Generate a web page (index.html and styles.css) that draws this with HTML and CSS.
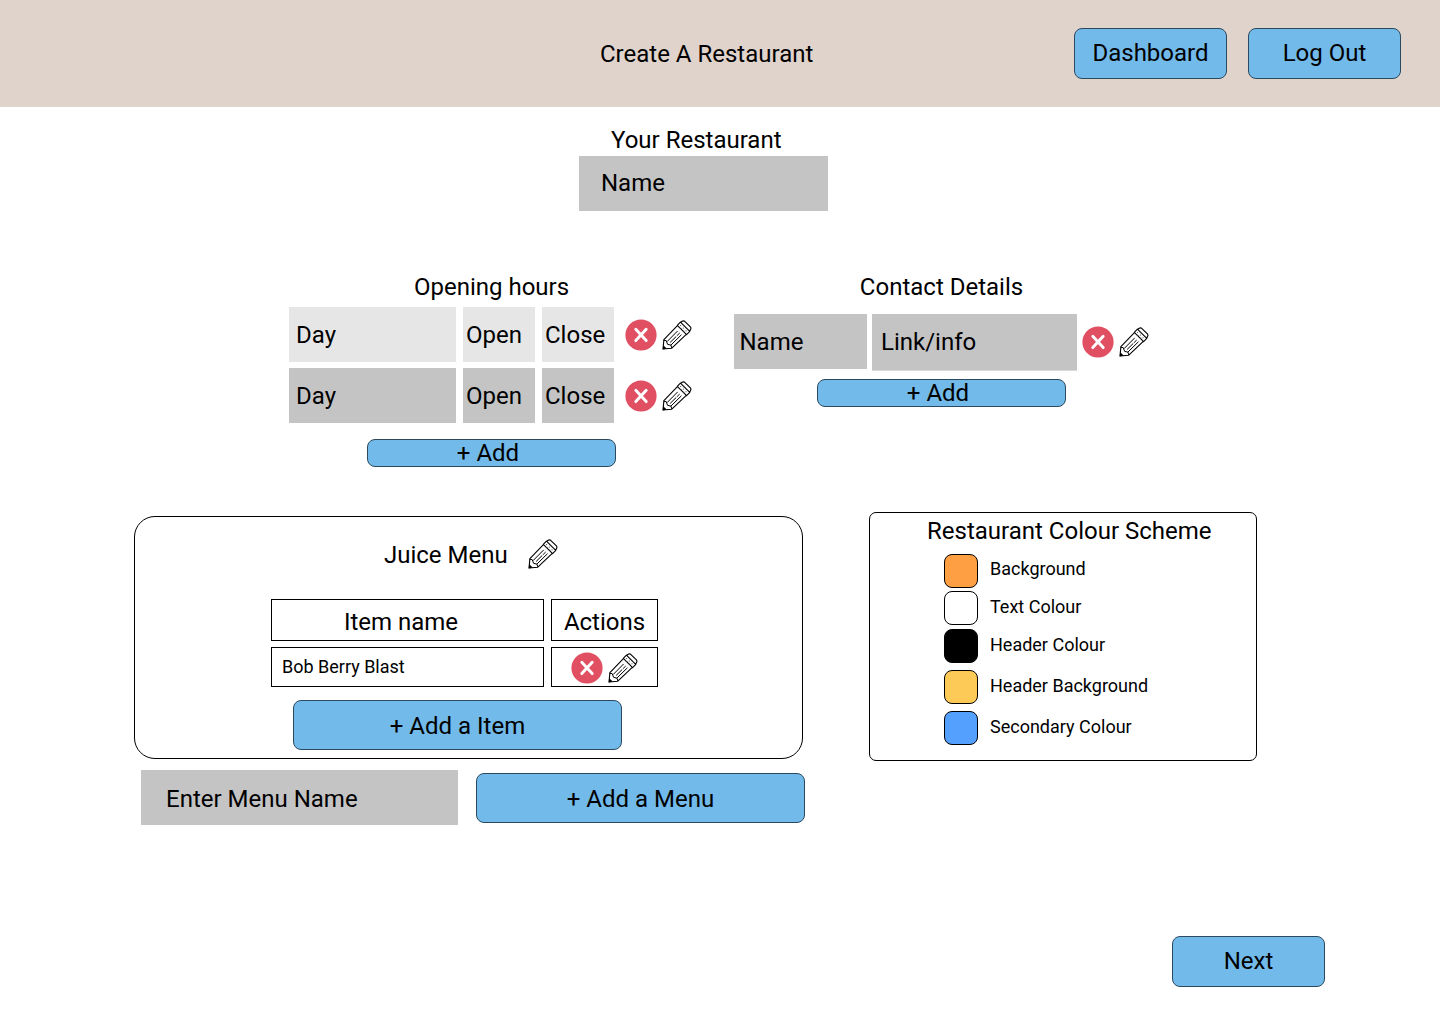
FILE: index.html
```html
<!DOCTYPE html>
<html lang="en">
<head>
<meta charset="utf-8">
<title>Create A Restaurant</title>
<link rel="stylesheet" href="styles.css">
</head>
<body>
<svg class="sprite" aria-hidden="true">
  <symbol id="remove" viewBox="0 0 32 32">
    <circle cx="16" cy="16" r="15.6" fill="#e14f62"/>
    <path d="M10.8 10.2 21.2 21.6M21.2 10.2 10.8 21.6" stroke="#fff" stroke-width="2.9" stroke-linecap="round"/>
  </symbol>
  <symbol id="pencil" viewBox="0 0 30 30">
    <g fill="none" stroke="#000" stroke-linejoin="round" stroke-linecap="round">
      <path stroke-width="1.1" d="M15.4 5.6 1.9 19.6 1 29 9.8 28.2 24.3 14.4M15.3 5.3 18.4 2.2 27.8 11.4 24.6 14.6ZM19.1 2 20.2 1.2Q21.5.4 22.7 1.3L28.4 6.9Q29.4 8.3 28.5 9.6L27.8 10.8"/>
      <path stroke-width="1" d="M2 20.3 4.2 20.6 5.6 24.3 9 25.2 9.7 27.6"/>
      <path stroke-width="1" d="M5.4 21.3 15.4 11.2M8.4 22.2 14 16.7M15.4 15.3 17.4 13.3M9.2 24.8 19.2 15"/>
      <path stroke-width="1" stroke="#333" d="M18.6 5.4v.05M21.3 8.1v.05M24 10.8v.05M18.9 8.4v.05M21.7 11.1v.05M21.5 5.7v.05M24.4 8.5v.05"/>
    </g>
    <path d="M1.3 25.2 4.7 28.5.7 29.4Z" fill="#000"/>
  </symbol>
</svg>

<header class="topbar">
  <h1 class="title">Create A Restaurant</h1>
  <nav class="nav">
    <button class="btn btn-nav">Dashboard</button>
    <button class="btn btn-nav">Log Out</button>
  </nav>
</header>

<main>
  <section class="restaurant">
    <h2>Your Restaurant</h2>
    <div class="field">Name</div>
  </section>

  <div class="details">
    <section class="hours">
      <h2>Opening hours</h2>
      <div class="row hours-row saved">
        <div class="field">Day</div><div class="field">Open</div><div class="field">Close</div>
        <div class="icons"><svg class="remove"><use href="#remove"/></svg><svg class="pencil"><use href="#pencil"/></svg></div>
      </div>
      <div class="row hours-row">
        <div class="field">Day</div><div class="field">Open</div><div class="field">Close</div>
        <div class="icons"><svg class="remove"><use href="#remove"/></svg><svg class="pencil"><use href="#pencil"/></svg></div>
      </div>
      <button class="btn btn-add">+ Add</button>
    </section>
    <section class="contact">
      <h2>Contact Details</h2>
      <div class="row contact-row">
        <div class="field">Name</div><div class="field link">Link/info</div>
        <div class="icons"><svg class="remove"><use href="#remove"/></svg><svg class="pencil"><use href="#pencil"/></svg></div>
      </div>
      <button class="btn btn-add">+ Add</button>
    </section>
  </div>

  <div class="setup">
    <div class="menus">
      <section class="menu-card">
        <div class="menu-head"><h2>Juice Menu</h2><svg class="pencil"><use href="#pencil"/></svg></div>
        <div class="items">
          <div class="cell head name-head">Item name</div>
          <div class="cell head">Actions</div>
          <div class="cell item">Bob Berry Blast</div>
          <div class="cell"><div class="icons"><svg class="remove"><use href="#remove"/></svg><svg class="pencil"><use href="#pencil"/></svg></div></div>
        </div>
        <button class="btn btn-wide">+ Add a Item</button>
      </section>
      <div class="new-menu">
        <div class="field">Enter Menu Name</div>
        <button class="btn btn-wide">+ Add a Menu</button>
      </div>
    </div>
    <section class="scheme">
      <h2>Restaurant Colour Scheme</h2>
      <ul>
        <li><span class="swatch orange"></span>Background</li>
        <li><span class="swatch white"></span>Text Colour</li>
        <li><span class="swatch black"></span>Header Colour</li>
        <li><span class="swatch yellow"></span>Header Background</li>
        <li><span class="swatch blue"></span>Secondary Colour</li>
      </ul>
    </section>
  </div>

  <div class="next"><button class="btn btn-nav">Next</button></div>
</main>
</body>
</html>
```
FILE: styles.css
```css
* { box-sizing: border-box; }

body {
  margin: 0;
  width: 1440px;
  height: 1024px;
  overflow: hidden;
  background: #fff;
  color: #000;
  font: 400 24px/28px Roboto, sans-serif;
}

h1, h2 { margin: 0; font: inherit; white-space: nowrap; }
svg { display: block; flex: none; }
.sprite { display: none; }

.btn {
  display: flex;
  align-items: center;
  justify-content: center;
  padding: 0;
  border: 1px solid #2b4a60;
  border-radius: 8px;
  background: #72baea;
  color: #000;
  font: inherit;
}
.btn-nav { width: 153px; height: 51px; padding-bottom: 1px; }
.btn-add { width: 249px; height: 28px; padding-right: 7px; }
.btn-wide { width: 329px; height: 50px; padding-top: 2px; }

.field {
  display: flex;
  align-items: center;
  height: 55px;
  padding-top: 1px;
  background: #c4c4c4;
}

.icons { display: flex; align-items: center; gap: 5px; }
.remove { width: 32px; height: 32px; }
.pencil { width: 30px; height: 30px; }

.topbar {
  display: flex;
  align-items: center;
  justify-content: space-between;
  height: 107px;
  padding: 0 39px 0 600px;
  background: #e0d3cb;
}
.nav { display: flex; gap: 21px; }

.restaurant { width: 249px; margin: 19px 0 0 579px; }
.restaurant h2 { margin-bottom: 2px; padding-left: 32px; }
.restaurant .field { padding: 0 0 1px 22px; }

.details {
  display: flex;
  align-items: flex-start;
  gap: 40px;
  margin: 62px 0 0 289px;
}
.hours, .contact { display: flex; flex-direction: column; align-items: center; }
.row { display: grid; width: 100%; }
.hours { width: 405px; }
.hours h2 { margin-bottom: 6px; }
.hours-row { grid-template-columns: 167px 72px 72px auto; column-gap: 7px; margin-bottom: 6px; }
.hours-row .field { padding-left: 3px; }
.hours-row .field:first-child { padding-left: 7px; }
.hours-row .icons { padding-left: 4px; }
.saved .field { background: #e6e6e6; }
.hours .btn { margin-top: 10px; }

.contact { width: 415px; }
.contact h2 { margin-bottom: 13px; }
.contact-row { grid-template-columns: 133px 205px auto; column-gap: 5px; align-items: start; }
.contact-row .field { padding-left: 5.5px; }
.contact-row .link { height: 56px; padding: 0 0 0 9px; box-shadow: 0 1px #d9d9d9; }
.contact-row .icons { height: 56px; }
.contact .btn { margin-top: 9px; }

.setup {
  display: flex;
  align-items: flex-start;
  margin: 45px 0 0 134px;
}
.menus { width: 671px; margin-top: 4px; }
.menu-card {
  width: 669px;
  height: 243px;
  padding: 23px 0 0 136px;
  border: 1px solid #000;
  border-radius: 21px;
}
.menu-head { display: flex; gap: 20px; align-items: center; padding-left: 113px; }
.menu-head .pencil { margin-top: -1px; }
.items {
  display: grid;
  grid-template: 42px 40px / 273px 107px;
  gap: 6px 7px;
  margin-top: 30px;
}
.cell { display: flex; align-items: center; justify-content: center; border: 1px solid #000; }
.cell.head { padding-top: 3px; }
.cell.name-head { padding-right: 13px; }
.cell.item { justify-content: flex-start; padding: 0 0 1px 10px; font-size: 18px; line-height: 21px; }
.cell .icons { padding-top: 2px; }
.menu-card .btn { margin: 13px 0 0 22px; }

.new-menu { display: flex; gap: 18px; margin-top: 11px; padding-left: 7px; }
.new-menu .field { width: 317px; padding: 3px 0 0 25px; }
.new-menu .btn { margin-top: 3px; }

.scheme {
  width: 388px;
  height: 249px;
  margin-left: 64px;
  padding: 4px 0 0 57px;
  border: 1px solid #000;
  border-radius: 7px;
}
.scheme ul {
  display: grid;
  grid-template-rows: 38px 38px 41px 41px 34px;
  margin: 8px 0 0;
  padding: 0 0 0 17px;
  list-style: none;
  font-size: 18px;
  line-height: 31px;
}
.scheme li { display: flex; gap: 12px; }
.swatch { width: 34px; height: 34px; border: 1px solid #000; border-radius: 8px; }
.orange { margin-top: .5px; background: #ff9f43; }
.white { background: #fff; }
.black { background: #000; }
.yellow { background: #feca57; }
.blue { background: #54a0ff; }

.next { display: flex; margin: 111px 0 0 1172px; }
```
